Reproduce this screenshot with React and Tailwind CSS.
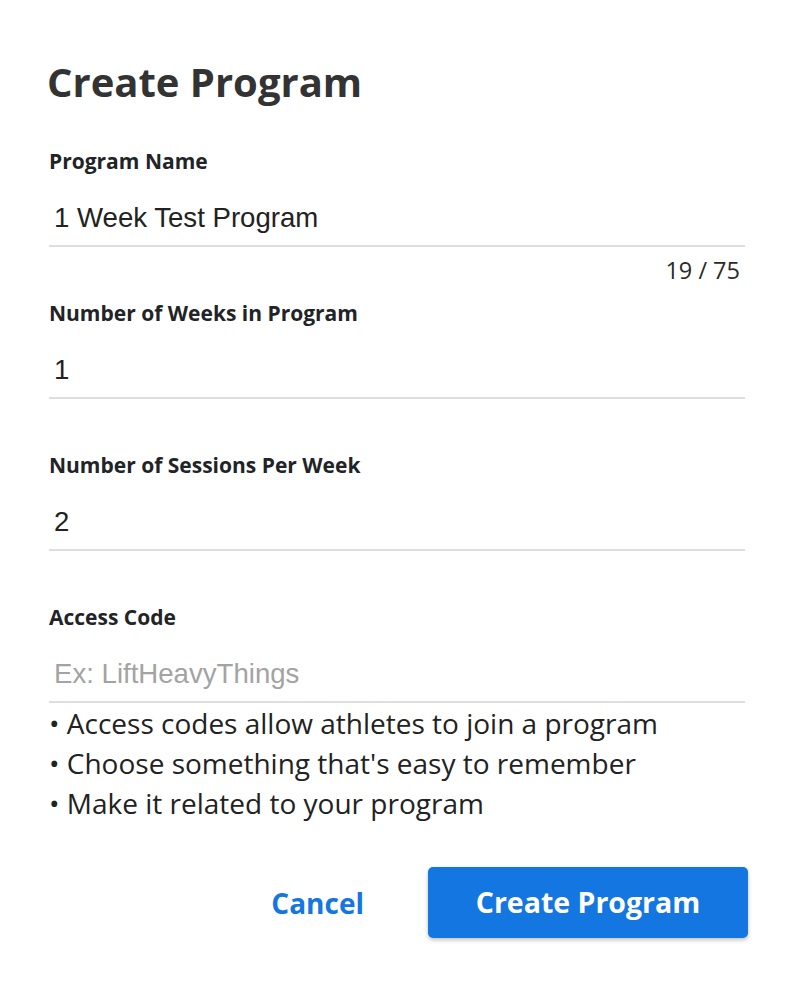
import React from "react";

const OPEN = { fontFamily: '"Open Sans", "Noto Sans", sans-serif' };
const HELV = { fontFamily: '"Liberation Sans", Arial, sans-serif' };

function Field({ label, value, placeholder, counter }) {
  return (
    <div className="flex flex-col mr-[3px]">
      <label className="text-[21px] leading-[24px] font-bold text-[#212326]" style={OPEN}>
        {label}
      </label>
      <div className="mt-[27px] border-b-2 border-[#dedede] pb-[9px] pl-[5px]">
        <div
          className={"text-[27.6px] leading-[36px] " + (value ? "text-[#222222]" : "text-[#a3a3a3]")}
          style={HELV}
        >
          {value || placeholder}
        </div>
      </div>
      {counter ? (
        <div className="flex justify-end pr-[5px] mt-[9px] h-[45px]">
          <span className="text-[23.5px] leading-[28px] text-[#2a2a2a]" style={OPEN}>
            {counter}
          </span>
        </div>
      ) : null}
    </div>
  );
}

export default function App() {
  return (
    <div className="w-[797px] h-[989px] bg-white px-[49px] pt-[58px]" style={OPEN}>
      <h1 className="text-[40px] leading-[48px] font-bold text-[#333333] -ml-[2px]">Create Program</h1>
      <div className="mt-[43px] flex flex-col">
        <Field label="Program Name" value="1 Week Test Program" counter="19 / 75" />
        <Field label="Number of Weeks in Program" value="1" />
        <div className="mt-[54px]">
          <Field label="Number of Sessions Per Week" value="2" />
        </div>
        <div className="mt-[54px]">
          <Field label="Access Code" placeholder="Ex: LiftHeavyThings" />
        </div>
        <ul className="text-[28px] leading-[40px] text-[#222222]">
          <li>• Access codes allow athletes to join a program</li>
          <li>• Choose something that's easy to remember</li>
          <li>• Make it related to your program</li>
        </ul>
      </div>
      <div className="mt-[44px] flex justify-end items-center">
        <button className="text-[28px] font-bold text-[#1476e0] px-[20px] h-[71px]">Cancel</button>
        <button className="ml-[44px] w-[320px] h-[71px] rounded-[5px] bg-[#1476e0] text-white text-[28.5px] font-bold shadow-[0_2px_4px_rgba(0,0,0,0.25)]">
          Create Program
        </button>
      </div>
    </div>
  );
}
